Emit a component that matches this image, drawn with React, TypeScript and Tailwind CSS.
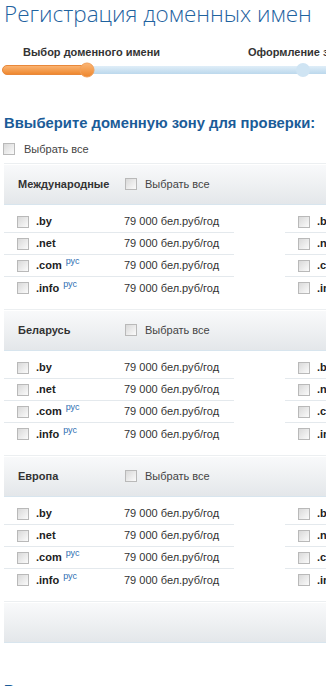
import React from 'react'

interface Zone {
  name: string
  rus?: boolean
}

const zones: Zone[] = [
  { name: '.by' },
  { name: '.net' },
  { name: '.com', rus: true },
  { name: '.info', rus: true },
]

const groups = ['Международные', 'Беларусь', 'Европа']

function Check() {
  return (
    <span className="inline-block w-[12px] h-[12px] shrink-0 border border-[#b9b9b9] bg-linear-to-br from-[#d9d9d9] to-[#fbfbfb]" />
  )
}

function ZoneColumn() {
  return (
    <div className="w-[230px] shrink-0">
      {zones.map((z, i) => (
        <div
          key={z.name}
          className={`flex items-center h-[22px] pl-[13px] ${i < zones.length - 1 ? 'border-b border-[#e4e9ed]' : ''}`}
        >
          <Check />
          <span className="w-[95px] pl-[7px] text-[11px] font-bold text-[#222] whitespace-nowrap">
            {z.name}
            {z.rus && <span className="ml-[4px] text-[9px] font-normal text-[#2f6fb3] relative -top-[5px]">рус</span>}
          </span>
          <span className="text-[11px] text-[#333] whitespace-nowrap">79 000 бел.руб/год</span>
        </div>
      ))}
    </div>
  )
}

function GroupHeader({ title }: { title?: string }) {
  return (
    <div className="h-[42px] flex items-center border-t border-[#eceff1] border-b border-b-[#d8e5ee] bg-linear-to-b from-[#f9fafb] to-[#e4e7ea] shadow-[inset_0_1px_0_#ffffff]">
      {title && (
        <>
          <span className="w-[121px] pl-[14px] text-[11px] font-bold text-[#333]">{title}</span>
          <Check />
          <span className="pl-[8px] text-[11px] text-[#444]">Выбрать все</span>
        </>
      )}
    </div>
  )
}

export default function App() {
  return (
    <div className="w-[326px] h-[686px] overflow-hidden bg-white font-['Liberation_Sans',Arial,sans-serif]">
      <div className="w-[600px] pl-[4px]">
        <h1 className="h-[28px] leading-[28px] text-[22.5px] font-['Open_Sans',sans-serif] font-light text-[#1f639f] whitespace-nowrap">
          Регистрация доменных имен
        </h1>

        <div className="mt-[17px] flex h-[14px] leading-[14px] text-[11px] font-bold text-[#333]">
          <span className="pl-[19px] w-[244px]">Выбор доменного имени</span>
          <span>Оформление заказа</span>
        </div>

        <svg className="mt-[3px] -ml-[4px] block" width="600" height="16" viewBox="0 0 600 16">
          <defs>
            <linearGradient id="og" x1="0" y1="0" x2="0" y2="1">
              <stop offset="0" stopColor="#fbb676" />
              <stop offset="1" stopColor="#ee862c" />
            </linearGradient>
            <linearGradient id="bg" x1="0" y1="0" x2="0" y2="1">
              <stop offset="0" stopColor="#e0eef8" />
              <stop offset="1" stopColor="#bcd8ec" />
            </linearGradient>
          </defs>
          <rect x="80" y="4" width="520" height="8" rx="4" fill="url(#bg)" />
          <circle cx="303" cy="8" r="7" fill="#cfe4f3" />
          <rect x="2.5" y="3.5" width="86" height="9" rx="4.5" fill="url(#og)" stroke="#e9883a" />
          <circle cx="87" cy="8" r="7" fill="url(#og)" stroke="#f1a05a" />
        </svg>

        <h2 className="mt-[35px] h-[20px] leading-[20px] text-[14.8px] font-bold text-[#1b5c98] whitespace-nowrap">
          Ввыберите доменную зону для проверки:
        </h2>

        <div className="mt-[9px] flex items-center h-[14px] text-[11px] text-[#444]">
          <span className="-ml-[1px] flex"><Check /></span>
          <span className="pl-[9px]">Выбрать все</span>
        </div>

        <div className="mt-[7px]">
          {groups.map((g) => (
            <div key={g}>
              <GroupHeader title={g} />
              <div className="flex gap-[51px] pt-[6px] pb-[10px]">
                <ZoneColumn />
                <ZoneColumn />
              </div>
            </div>
          ))}
          <GroupHeader />
        </div>

        <h2 className="mt-[37px] h-[20px] leading-[20px] text-[14.8px] font-bold text-[#1b5c98] whitespace-nowrap">
          Введите имя домена:
        </h2>
      </div>
    </div>
  )
}
